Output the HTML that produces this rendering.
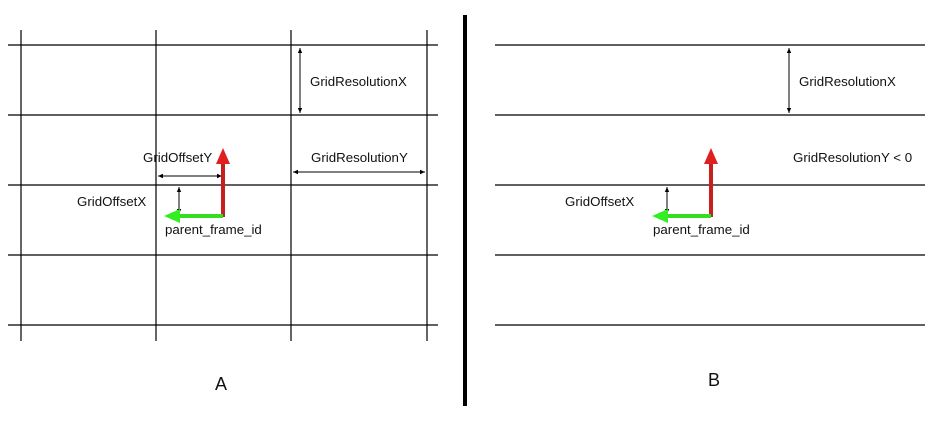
<!DOCTYPE html><html><head><style>body{margin:0;background:#fff}svg{display:block}text{font-family:"Liberation Sans",sans-serif;font-size:13.3px;fill:#111}</style></head><body>
<svg width="942" height="423" viewBox="0 0 942 423">
<defs><marker id="a" markerWidth="6" markerHeight="6" refX="5" refY="3" orient="auto-start-reverse"><path d="M0,0.8 L5,3 L0,5.2z" fill="#000"/></marker></defs>
<g stroke="#000" stroke-width="1.2">
<line x1="21" y1="30" x2="21" y2="341"/><line x1="156" y1="30" x2="156" y2="341"/><line x1="291" y1="30" x2="291" y2="341"/><line x1="427" y1="30" x2="427" y2="341"/>
<line x1="8" y1="45" x2="438" y2="45"/><line x1="8" y1="115" x2="438" y2="115"/><line x1="8" y1="185" x2="438" y2="185"/><line x1="8" y1="255" x2="438" y2="255"/><line x1="8" y1="325" x2="438" y2="325"/>
<line x1="495" y1="45" x2="925" y2="45"/><line x1="495" y1="115" x2="925" y2="115"/><line x1="495" y1="185" x2="925" y2="185"/><line x1="495" y1="255" x2="925" y2="255"/><line x1="495" y1="325" x2="925" y2="325"/>
</g>
<line x1="465" y1="15" x2="465" y2="406" stroke="#000" stroke-width="4"/>
<g stroke="#000" stroke-width="1" marker-start="url(#a)" marker-end="url(#a)">
<line x1="300" y1="48" x2="300" y2="113"/><line x1="293" y1="172" x2="425" y2="172"/>
<line x1="158" y1="176" x2="222" y2="176"/><line x1="179" y1="187" x2="179" y2="214"/>
<line x1="789" y1="48" x2="789" y2="113"/><line x1="667" y1="187" x2="667" y2="214"/>
</g>
<g stroke-width="4">
<line x1="223" y1="217" x2="223" y2="162" stroke="#c81e1e"/><path d="M216,164 L223,148 L230,164z" fill="#e02020"/>
<line x1="223" y1="216" x2="178" y2="216" stroke="#33dd22"/><path d="M180,209 L164,216 L180,223z" fill="#33ee22"/>
<line x1="711" y1="217" x2="711" y2="162" stroke="#c81e1e"/><path d="M704,164 L711,148 L718,164z" fill="#e02020"/>
<line x1="711" y1="216" x2="666" y2="216" stroke="#33dd22"/><path d="M668,209 L652,216 L668,223z" fill="#33ee22"/>
</g>
<text x="310" y="86">GridResolutionX</text><text x="311" y="162">GridResolutionY</text>
<text x="143" y="162">GridOffsetY</text><text x="77" y="206">GridOffsetX</text><text x="165" y="234">parent_frame_id</text>
<text x="799" y="86">GridResolutionX</text><text x="793" y="162">GridResolutionY &lt; 0</text>
<text x="565" y="206">GridOffsetX</text><text x="653" y="234">parent_frame_id</text>
<text x="215" y="390" style="font-size:18px">A</text><text x="708" y="386" style="font-size:18px">B</text>
</svg></body></html>
